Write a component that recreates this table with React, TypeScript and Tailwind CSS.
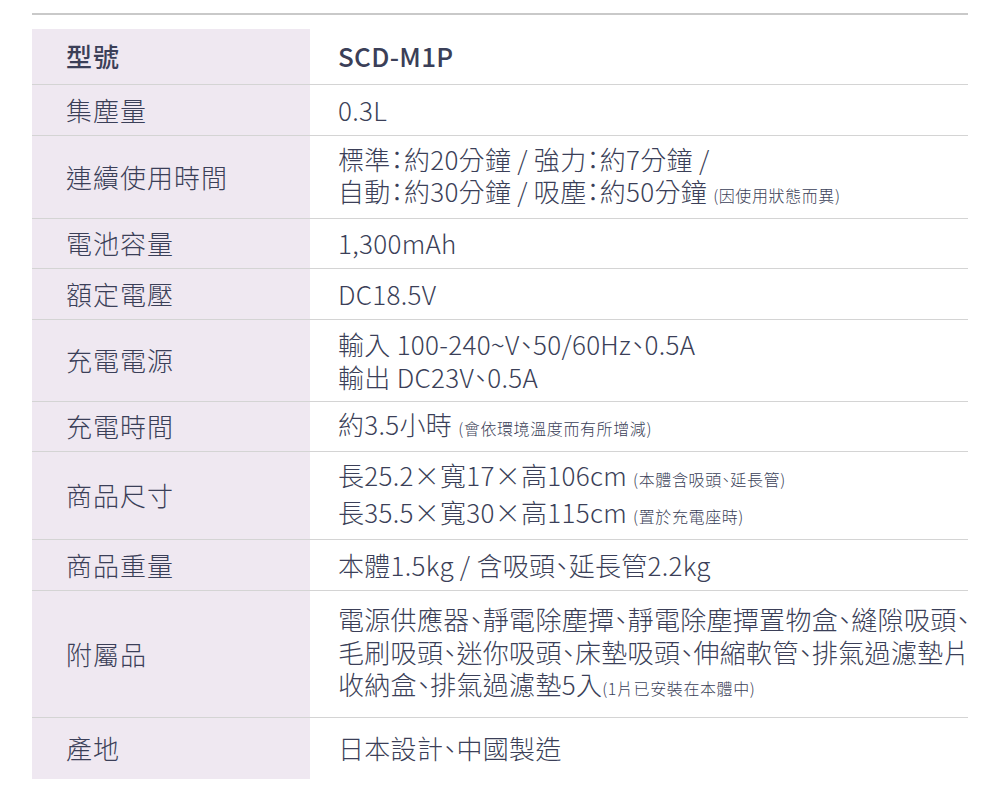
const rows: { label: string; h: string; bold?: boolean; value: React.ReactNode }[] = [
  { label: '型號', h: 'h-[56px]', bold: true, value: 'SCD-M1P' },
  { label: '集塵量', h: 'h-[51px]', value: '0.3L' },
  {
    label: '連續使用時間',
    h: 'h-[83px]',
    value: (
      <>
        標準：約20分鐘 / 強力：約7分鐘 /
        <br />
        自動：約30分鐘 / 吸塵：約50分鐘 <small>(因使用狀態而異)</small>
      </>
    ),
  },
  { label: '電池容量', h: 'h-[50px]', value: '1,300mAh' },
  { label: '額定電壓', h: 'h-[51px]', value: 'DC18.5V' },
  {
    label: '充電電源',
    h: 'h-[82px]',
    value: (
      <>
        輸入 100-240~V、50/60Hz、0.5A
        <br />
        輸出 DC23V、0.5A
      </>
    ),
  },
  {
    label: '充電時間',
    h: 'h-[50px]',
    value: (
      <>
        約3.5小時 <small>(會依環境溫度而有所增減)</small>
      </>
    ),
  },
  {
    label: '商品尺寸',
    h: 'h-[88px]',
    value: (
      <>
        長25.2×寬17×高106cm <small>(本體含吸頭、延長管)</small>
        <br />
        長35.5×寬30×高115cm <small>(置於充電座時)</small>
      </>
    ),
  },
  { label: '商品重量', h: 'h-[51px]', value: '本體1.5kg / 含吸頭、延長管2.2kg' },
  {
    label: '附屬品',
    h: 'h-[127px]',
    value: (
      <>
        電源供應器、靜電除塵撢、靜電除塵撢置物盒、縫隙吸頭、
        <br />
        毛刷吸頭、迷你吸頭、床墊吸頭、伸縮軟管、排氣過濾墊片
        <br />
        收納盒、排氣過濾墊5入<small>(1片已安裝在本體中)</small>
      </>
    ),
  },
  { label: '產地', h: 'h-[61px]', value: '日本設計、中國製造' },
];

export default function App() {
  return (
    <div
      className="w-[1000px] h-[811px] bg-white px-8 pt-[13px] text-[#3b3f58] [font-feature-settings:'halt']"
      style={{ fontFamily: '"Noto Sans CJK TC", "Noto Sans", sans-serif' }}
    >
      <div className="h-[2px] bg-[#c9c9c9]" />
      <div className="mt-[14px]">
        {rows.map((row, i) => (
          <div
            key={row.label}
            className={`flex ${row.h} ${i < rows.length - 1 ? 'border-b border-[#d4d4d4]' : ''}`}
          >
            {/* label column */}
            <div
              className={`w-[278px] shrink-0 bg-[#efe8f1] pl-[34px] flex items-center text-[26px] leading-[32.5px] tracking-[1px] ${
                row.bold ? 'font-medium' : 'font-light'
              }`}
            >
              {row.label}
            </div>
            {/* value column */}
            <div
              className={`flex-1 pl-[28px] flex items-center whitespace-nowrap text-[26px] leading-[32.5px] tracking-[0.3px] [&_small]:text-[16px] [&_small]:tracking-[0.6px] ${
                row.bold ? 'font-medium' : 'font-light'
              }`}
            >
              <div>{row.value}</div>
            </div>
          </div>
        ))}
      </div>
    </div>
  );
}
